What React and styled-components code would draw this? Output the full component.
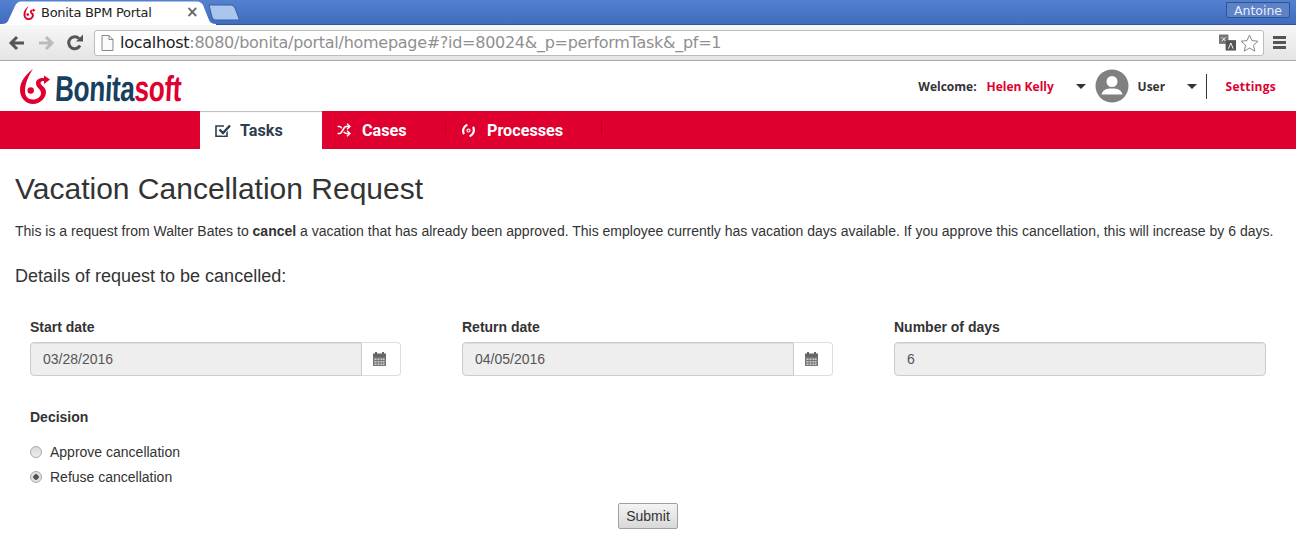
import styled, { createGlobalStyle } from "styled-components";
import { Shuffle } from "lucide-react";

const GlobalStyle = createGlobalStyle`
  html, body {
    margin: 0;
    padding: 0;
    background: #fff;
    overflow: hidden;
    font-family: "Liberation Sans", Arial, sans-serif;
    color: #333;
  }
`;

const RED = "#df0030";

const TitleBar = styled.div`
  height: 24px;
  position: relative;
  display: flex;
  justify-content: flex-end;
  background: linear-gradient(#5480d0, #3f6cbe);
  border-bottom: 1px solid #2f5596;
`;
const TabShape = styled.svg`
  position: absolute;
  left: 0;
  top: 0;
`;
const FavIcon = styled.span`
  position: absolute;
  left: 23px;
  top: 6px;
  display: flex;
`;
const TabTitle = styled.span`
  position: absolute;
  left: 41px;
  top: 5px;
  font: 13px "DejaVu Sans", sans-serif;
  letter-spacing: -0.28px;
  color: #222;
  white-space: nowrap;
`;
const TabClose = styled.span`
  position: absolute;
  left: 186px;
  top: 3px;
  font: bold 15px "DejaVu Sans", sans-serif;
  color: #666;
`;
const ProfileBadge = styled.div`
  width: 64px;
  height: 16px;
  margin: 2px 6px 0 0;
  box-sizing: border-box;
  border: 1px solid #2f5596;
  border-radius: 0 0 3px 3px;
  background: #5d82c8;
  color: #e8eef8;
  font: 12.5px/15px "DejaVu Sans", sans-serif;
  text-align: center;
`;
const Toolbar = styled.div`
  height: 35px;
  display: flex;
  align-items: center;
  padding: 0 8px;
  background: linear-gradient(#f7f7f7, #e4e4e4);
  border-bottom: 1px solid #a8a8a8;
`;
const NavIcons = styled.div`
  display: flex;
  align-items: center;
  gap: 11px;
  width: 86px;
`;
const Omnibox = styled.div`
  width: 1170px;
  height: 26px;
  box-sizing: border-box;
  display: flex;
  align-items: center;
  padding: 0 4px 0 6px;
  gap: 4px;
  background: #fff;
  border: 1px solid #bcbcbc;
  border-radius: 3px;
`;
const Url = styled.span`
  flex: 1;
  margin-left: 2px;
  font: 16px "DejaVu Sans", sans-serif;
  letter-spacing: -0.28px;
  color: #909090;
  white-space: nowrap;
  b {
    font-weight: normal;
    color: #222;
  }
`;
const Menu = styled.div`
  margin-left: 9px;
  width: 13px;
  display: flex;
  flex-direction: column;
  gap: 2px;
  i {
    height: 3px;
    background: #555;
  }
`;
const Header = styled.header`
  height: 50px;
  display: flex;
  align-items: center;
  justify-content: space-between;
  padding: 0 20px;
`;
const Logo = styled.div`
  display: flex;
  align-items: center;
  gap: 5px;
`;
const LogoText = styled.span`
  display: inline-block;
  font: bold 36px/40px "Liberation Sans", sans-serif;
  color: #17405f;
  letter-spacing: -0.5px;
  transform-origin: left center;
  transform: translateY(3px) scaleX(0.73) skewX(-4deg);
  span {
    color: ${RED};
  }
`;
const UserBox = styled.div`
  display: flex;
  align-items: center;
  font: bold 12px "Open Sans", "Noto Sans", sans-serif;
  color: #333;
`;
const UserName = styled.span`
  margin-left: 10px;
  width: 89px;
  color: ${RED};
`;
const RoleName = styled.span`
  margin-left: 9px;
  width: 49px;
`;
const SettingsLink = styled.span`
  color: ${RED};
  letter-spacing: 0.25px;
`;
const Caret = styled.i`
  width: 0;
  height: 0;
  border-left: 5px solid transparent;
  border-right: 5px solid transparent;
  border-top: 5px solid #333;
`;
const Avatar = styled.svg`
  display: block;
  margin-left: 9px;
`;
const Divider = styled.i`
  width: 1px;
  height: 25px;
  background: #333;
  margin: 0 19px 0 9px;
`;
const NavBar = styled.nav`
  height: 38px;
  display: flex;
  padding-left: 200px;
  background: ${RED};
`;
const NavItem = styled.div`
  width: ${(p) => p.$w}px;
  box-sizing: border-box;
  display: flex;
  align-items: center;
  gap: ${(p) => p.$gap}px;
  padding-left: ${(p) => p.$pad}px;
  font: bold 16.2px Roboto, "Noto Sans", sans-serif;
  color: ${(p) => (p.$active ? "#2c3e50" : "#fff")};
  background: ${(p) => (p.$active ? "#fff" : "transparent")};
  box-shadow: ${(p) => (p.$active ? "inset 0 2px 1px -1px #bbb" : "none")};
  position: relative;
  ${(p) =>
    p.$sep
      ? `&::after { content: ""; position: absolute; right: 0; top: 10px; height: 13px; width: 1px; background: #b80028; }`
      : ""}
`;
const Content = styled.main`
  padding: 0 15px;
`;
const Title = styled.h1`
  margin: 23px 0 0;
  font-size: 30px;
  font-weight: 400;
  line-height: 33px;
`;
const Intro = styled.p`
  margin: 16px 0 0;
  font-size: 14px;
  line-height: 20px;
  white-space: nowrap;
`;
const SubTitle = styled.h4`
  margin: 25px 0 0;
  font-size: 18px;
  font-weight: 400;
  line-height: 20px;
`;
const FieldGrid = styled.div`
  margin: 31px 0 0 15px;
  width: 1236px;
  display: grid;
  grid-template-columns: repeat(3, 372px);
  column-gap: 60px;
`;
const Label = styled.label`
  display: block;
  font-size: 14px;
  font-weight: 700;
  line-height: 20px;
  margin-bottom: ${(p) => p.$gap || 5}px;
`;
const InputGroup = styled.div`
  display: flex;
  height: 34px;
  width: ${(p) => (p.$full ? 372 : 371)}px;
`;
const ReadOnly = styled.div`
  flex: 1;
  box-sizing: border-box;
  padding: 0 12px;
  font-size: 14px;
  line-height: 32px;
  color: #555;
  background: #eee;
  border: 1px solid #ccc;
  border-radius: ${(p) => (p.$full ? "4px" : "4px 0 0 4px")};
  box-shadow: inset 0 1px 1px rgba(0, 0, 0, 0.075);
`;
const CalendarButton = styled.div`
  width: 39px;
  box-sizing: border-box;
  display: flex;
  align-items: center;
  justify-content: center;
  padding-right: 3px;
  border: 1px solid #ddd;
  border-left: none;
  border-radius: 0 4px 4px 0;
  background: #fff;
`;
const Decision = styled.div`
  margin: 31px 0 0 15px;
`;
const RadioRow = styled.div`
  display: flex;
  align-items: center;
  height: 25px;
  gap: 8px;
  font-size: 14px;
  color: #333;
`;
const RadioDot = styled.span`
  width: 12px;
  height: 12px;
  box-sizing: border-box;
  border: 1px solid #a9a9a9;
  border-radius: 50%;
  background: ${(p) =>
    p.$checked
      ? "radial-gradient(circle, #555 0 2.5px, #e2e2e2 3px)"
      : "linear-gradient(#d8d8d8, #eee)"};
`;
const SubmitRow = styled.div`
  display: flex;
  justify-content: center;
  margin-top: 14px;
`;
const Submit = styled.button`
  width: 60px;
  height: 26px;
  padding: 0;
  font: 14px "Liberation Sans", sans-serif;
  color: #333;
  background: linear-gradient(#f4f4f4, #d8d8d8);
  border: 1px solid #a0a0a0;
  border-radius: 2px;
`;

const LogoMark = ({ width = 30, height = 35 }) => (
  <svg width={width} height={height} viewBox="0 0 30 35" fill={RED}>
    <path d="M13 0C5 6 0 13 0 21C0 29 6 35 13 35C20 35 26 29 26 23C26 18 21 17 20.5 14C20.5 12.5 22 12 24 12L24 15L30 10.5L24 6.5L24 9C19 8.5 15.5 11 16 15C16.5 19 21 20 21 24C21 28 17 30.5 13 30.5C8 30.5 5 27 5 22C5 14 9 6 13 0Z" />
    <circle cx="10.7" cy="21.5" r="3.2" />
  </svg>
);

const Calendar = () => (
  <svg width="13" height="14" viewBox="0 0 13 14">
    <path d="M2 0h2v2H2zM9 0h2v2H9z" fill="#666" />
    <path d="M0 1.5h13V5H0z" fill="#666" />
    <path d="M0 5h13v9H0z" fill="#777" />
    <path
      d="M1.5 6.5h2v1.5h-2zM4.5 6.5h2v1.5h-2zM7.5 6.5h2v1.5h-2zM10 6.5h1.5v1.5H10zM1.5 9h2v1.5h-2zM4.5 9h2v1.5h-2zM7.5 9h2v1.5h-2zM10 9h1.5v1.5H10zM1.5 11.5h2V13h-2zM4.5 11.5h2V13h-2zM7.5 11.5h2V13h-2zM10 11.5h1.5V13H10z"
      fill="#ccc"
    />
  </svg>
);

const TaskIcon = () => (
  <svg width="17" height="15" viewBox="0 0 17 15" fill="none">
    <path d="M12 7.5V13.2H1V3h8" stroke="#2c3e50" strokeWidth="1.6" />
    <path d="M4.5 6.5L8 10L15 2.5" stroke="#fff" strokeWidth="4" />
    <path d="M4.5 6.5L8 10L15 2.5" stroke="#2c3e50" strokeWidth="2.4" />
  </svg>
);

const ProcessIcon = () => (
  <svg width="13" height="13" viewBox="0 0 13 13" fill="none" stroke="#fff" strokeWidth="2.2">
    <g transform="rotate(20 6.5 6.5)">
      <path d="M3.5 1.5C0.5 4 0.5 9 3.5 11.5" />
      <path d="M9.5 1.5C12.5 4 12.5 9 9.5 11.5" />
    </g>
    <circle cx="6.5" cy="6.5" r="1.5" strokeWidth="1.2" />
  </svg>
);

const fields = [
  { label: "Start date", value: "03/28/2016", calendar: true },
  { label: "Return date", value: "04/05/2016", calendar: true },
  { label: "Number of days", value: "6" },
];

const App = () => (
  <>
    <GlobalStyle />
    <TitleBar>
      <TabShape width="245" height="25" viewBox="0 0 245 25">
        <path
          d="M203 5Q201 1.5 197 1.5L21 1.5Q17 1.5 15 6L8 21Q6.5 24 2 24L0 24L0 25L216 25L216 24Q210.5 24 209 20Z"
          fill="#fff"
        />
        <path
          d="M209 5L231 5Q234 5 235 8L239.5 20L215 20Q213 20 212 17Z"
          fill="#a9c6ee"
          stroke="#3a5f9f"
        />
      </TabShape>
      <FavIcon>
        <LogoMark width={13} height={14} />
      </FavIcon>
      <TabTitle>Bonita BPM Portal</TabTitle>
      <TabClose>×</TabClose>
      <ProfileBadge>Antoine</ProfileBadge>
    </TitleBar>
    <Toolbar>
      <NavIcons>
        <svg width="18" height="16" viewBox="0 0 18 16" fill="none" stroke="#555" strokeWidth="3">
          <path d="M16 8H3M9 2L3 8l6 6" />
        </svg>
        <svg width="18" height="16" viewBox="0 0 18 16" fill="none" stroke="#bbb" strokeWidth="3">
          <path d="M2 8h13M9 2l6 6-6 6" />
        </svg>
        <svg width="18" height="18" viewBox="0 0 18 18" fill="none">
          <path d="M14 11.5A6 6 0 1 1 13 4.5" stroke="#555" strokeWidth="3" />
          <path d="M10 7.5h7V.5z" fill="#555" />
        </svg>
      </NavIcons>
      <Omnibox>
        <svg width="13" height="16" viewBox="0 0 13 16" fill="#fafafa" stroke="#888">
          <path d="M1 .5h7l4 4v11H1zM8 .5v4h4" />
        </svg>
        <Url>
          <b>localhost</b>:8080/bonita/portal/homepage#?id=80024&amp;_p=performTask&amp;_pf=1
        </Url>
        <svg width="17" height="17" viewBox="0 0 18 17">
          <path d="M0 0h10v10H0z" fill="#777" />
          <path d="M7 6h11v11H7z" fill="#555" />
          <path d="M3 3l4 4M7 3l-4 4" stroke="#fff" />
          <path d="M10 15l2.5-6 2.5 6" stroke="#fff" fill="none" />
        </svg>
        <svg width="19" height="18" viewBox="0 0 19 18" fill="#fff" stroke="#888">
          <path d="M9.5 1l2.5 5.6 6 .6-4.6 4 1.4 6-5.3-3.2-5.3 3.2 1.4-6-4.6-4 6-.6z" />
        </svg>
      </Omnibox>
      <Menu>
        <i />
        <i />
        <i />
      </Menu>
    </Toolbar>
    <Header>
      <Logo>
        <LogoMark />
        <LogoText>
          Bonita<span>soft</span>
        </LogoText>
      </Logo>
      <UserBox>
        <span>Welcome:</span>
        <UserName>Helen Kelly</UserName>
        <Caret />
        <Avatar width="34" height="34" viewBox="0 0 34 34">
          <circle cx="17" cy="17" r="16.5" fill="#808080" />
          <circle cx="17" cy="12.5" r="5.5" fill="#fff" />
          <path d="M6.5 25.5C8 20 12 19.5 17 19.5s9 .5 10.5 6z" fill="#fff" />
        </Avatar>
        <RoleName>User</RoleName>
        <Caret />
        <Divider />
        <SettingsLink>Settings</SettingsLink>
      </UserBox>
    </Header>
    <NavBar>
      <NavItem $active $w={122} $pad={15} $gap={8}>
        <TaskIcon />
        Tasks
      </NavItem>
      <NavItem $w={124} $pad={15} $gap={11} $sep>
        <Shuffle size={14} strokeWidth={2.6} />
        Cases
      </NavItem>
      <NavItem $w={156} $pad={16} $gap={12} $sep>
        <ProcessIcon />
        Processes
      </NavItem>
    </NavBar>
    <Content>
      <Title>Vacation Cancellation Request</Title>
      <Intro>
        This is a request from Walter Bates to <b>cancel</b> a vacation that has already been
        approved. This employee currently has vacation days available. If you approve this
        cancellation, this will increase by 6 days.
      </Intro>
      <SubTitle>Details of request to be cancelled:</SubTitle>
      <FieldGrid>
        {fields.map((f) => (
          <div key={f.label}>
            <Label>{f.label}</Label>
            <InputGroup $full={!f.calendar}>
              <ReadOnly $full={!f.calendar}>{f.value}</ReadOnly>
              {f.calendar && (
                <CalendarButton>
                  <Calendar />
                </CalendarButton>
              )}
            </InputGroup>
          </div>
        ))}
      </FieldGrid>
      <Decision>
        <Label $gap={12}>Decision</Label>
        <RadioRow>
          <RadioDot />
          Approve cancellation
        </RadioRow>
        <RadioRow>
          <RadioDot $checked />
          Refuse cancellation
        </RadioRow>
      </Decision>
      <SubmitRow>
        <Submit>Submit</Submit>
      </SubmitRow>
    </Content>
  </>
);

export default App;
